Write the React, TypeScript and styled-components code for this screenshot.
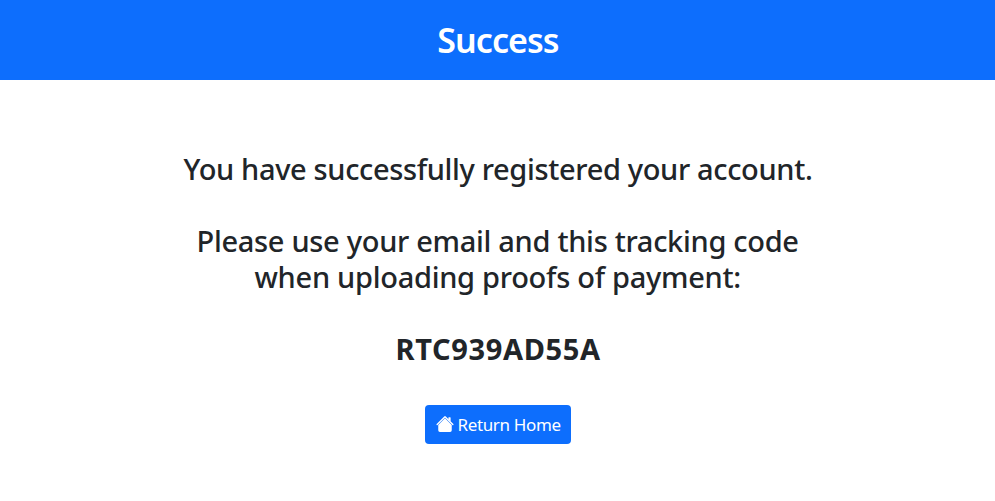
import React from "react";
import styled, { createGlobalStyle } from "styled-components";

const GlobalStyle = createGlobalStyle`
  *, *::before, *::after { box-sizing: border-box; }
  body { margin: 0; background: #fff; color: #212529; font-family: "Noto Sans", sans-serif; }
`;

const Header = styled.header`
  height: 80px;
  display: flex;
  align-items: center;
  justify-content: center;
  background: #0d6efd;
  color: #fff;
`;

const Title = styled.h1`
  margin: 0;
  padding-left: 1px;
  font-size: 34px;
  font-weight: 600;
  letter-spacing: -0.95px;
  line-height: 42px;
`;

const Main = styled.main`
  display: flex;
  flex-direction: column;
  align-items: center;
  padding-top: 71px;
`;

const Line = styled.div<{ $width: number; $spacing: number; $bold?: boolean }>`
  width: ${(p) => p.$width}px;
  font-size: 29px;
  line-height: 36px;
  font-weight: ${(p) => (p.$bold ? 700 : 500)};
  letter-spacing: ${(p) => p.$spacing}px;
  white-space: nowrap;
`;

const Message = styled.div`
  display: flex;
  flex-direction: column;
  align-items: center;
  margin-bottom: 36px;
`;

const HomeButton = styled.button`
  display: flex;
  align-items: center;
  gap: 4px;
  width: 146px;
  height: 39px;
  margin-top: 2px;
  padding: 0 10px 0 11px;
  border: 0;
  border-radius: 4px;
  background: #0d6efd;
  color: #fff;
  font-family: inherit;
  font-size: 17px;
  letter-spacing: -0.36px;
  white-space: nowrap;
`;

const HouseIcon = styled.svg`
  flex: none;
  width: 18px;
  height: 18px;
  margin-top: -2px;
  fill: currentColor;
`;

export default function App() {
  return (
    <>
      <GlobalStyle />
      <Header><Title>Success</Title></Header>
      <Main>
        <Message>
          <Line $width={628} $spacing={-0.345}>You have successfully registered your account.</Line>
        </Message>
        <Message>
          <Line $width={602} $spacing={-0.3}>Please use your email and this tracking code</Line>
          <Line $width={486} $spacing={-0.28}>when uploading proofs of payment:</Line>
        </Message>
        <Message>
          <Line $width={204} $spacing={0.65} $bold>RTC939AD55A</Line>
        </Message>
        <HomeButton>
          <HouseIcon viewBox="0 0 16 16" aria-hidden="true">
            <path d="M8 2.9l6 6v4.6a1.5 1.5 0 0 1-1.5 1.5h-9A1.5 1.5 0 0 1 2 13.5V8.9l6-6zm5-.4V6l-2-2V2.5a.5.5 0 0 1 .5-.5h1a.5.5 0 0 1 .5.5z" />
            <path d="M7.293 1.35a1 1 0 0 1 1.414 0l6.7 6.7a.6.6 0 0 1-.85.85L8 2.35 1.443 8.9a.6.6 0 1 1-.85-.85l6.7-6.7z" />
          </HouseIcon>
          Return Home
        </HomeButton>
      </Main>
    </>
  );
}
